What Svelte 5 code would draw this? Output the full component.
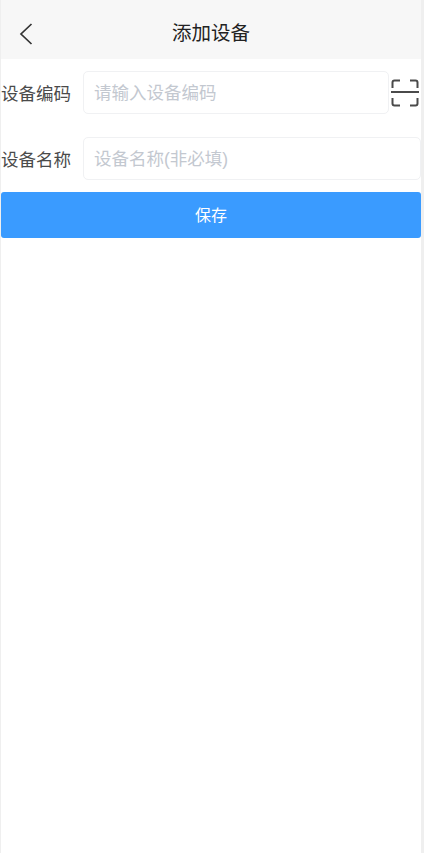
<script lang="ts">
  let code = $state("");
  let name = $state("");
</script>

<div class="page">
  <header class="nav">
    <button class="back" aria-label="返回">
      <svg width="14" height="22" viewBox="0 0 14 22" fill="none">
        <path d="M12.5 1 L2 11 L12.5 21" stroke="#333" stroke-width="1.7" />
      </svg>
    </button>
    <h1 class="title">添加设备</h1>
  </header>

  <div class="form">
    <div class="row first">
      <span class="label">设备编码</span>
      <input class="field" placeholder="请输入设备编码" bind:value={code} />
      <button class="scan" aria-label="扫码">
        <svg width="28" height="28" viewBox="0 0 28 28" fill="none" stroke="#4a4a4a" stroke-width="2">
          <path d="M1.5 9 V3.5 Q1.5 1.5 3.5 1.5 H9" />
          <path d="M19 1.5 H24.5 Q26.5 1.5 26.5 3.5 V9" />
          <path d="M0 13 H28" />
          <path d="M1.5 19 V24.5 Q1.5 26.5 3.5 26.5 H9" />
          <path d="M19 26.5 H24.5 Q26.5 26.5 26.5 24.5 V19" />
        </svg>
      </button>
    </div>

    <div class="row second">
      <span class="label">设备名称</span>
      <input class="field" placeholder="设备名称(非必填)" bind:value={name} />
    </div>

    <button class="save">保存</button>
  </div>
</div>

<style>
  :global(body) {
    margin: 0;
    background: #efefef;
    font-family: "Liberation Sans", "Noto Sans CJK SC", sans-serif;
  }

  .page {
    margin-left: 1px;
    margin-right: 3px;
    min-height: 853px;
    background: #fff;
  }

  .nav {
    position: relative;
    display: flex;
    align-items: center;
    justify-content: center;
    height: 59px;
    background: #f7f7f7;
  }

  .back {
    position: absolute;
    left: 18px;
    top: 23px;
    display: flex;
    padding: 0;
    border: 0;
    background: none;
  }

  .title {
    margin: 0;
    font-size: 19.5px;
    font-weight: 400;
    color: #222;
    transform: translateY(2px);
  }

  .form {
    display: flex;
    flex-direction: column;
  }

  .row {
    display: flex;
    align-items: center;
  }

  .first {
    margin-top: 12px;
  }

  .second {
    margin-top: 23px;
  }

  .label {
    flex: none;
    width: 82px;
    font-size: 17.5px;
    color: #4a4a4a;
    white-space: nowrap;
  }

  .field {
    flex: 1;
    min-width: 0;
    height: 43px;
    box-sizing: border-box;
    padding: 2px 10px 0;
    border: 1px solid #f0f1f3;
    border-radius: 5px;
    outline: none;
    background: #fff;
    font: inherit;
    font-size: 17.5px;
    color: #444;
  }

  .field::placeholder {
    color: #c3c8d0;
    opacity: 1;
  }

  .scan {
    flex: none;
    display: flex;
    width: 32px;
    height: 28px;
    margin-top: 1px;
    padding: 0 2px;
    box-sizing: border-box;
    border: 0;
    background: none;
  }

  .save {
    height: 46px;
    margin-top: 12px;
    padding: 0 0 3px;
    border: 0;
    border-radius: 3px;
    background: #3a9bff;
    font: inherit;
    font-size: 16px;
    color: #fff;
  }
</style>
